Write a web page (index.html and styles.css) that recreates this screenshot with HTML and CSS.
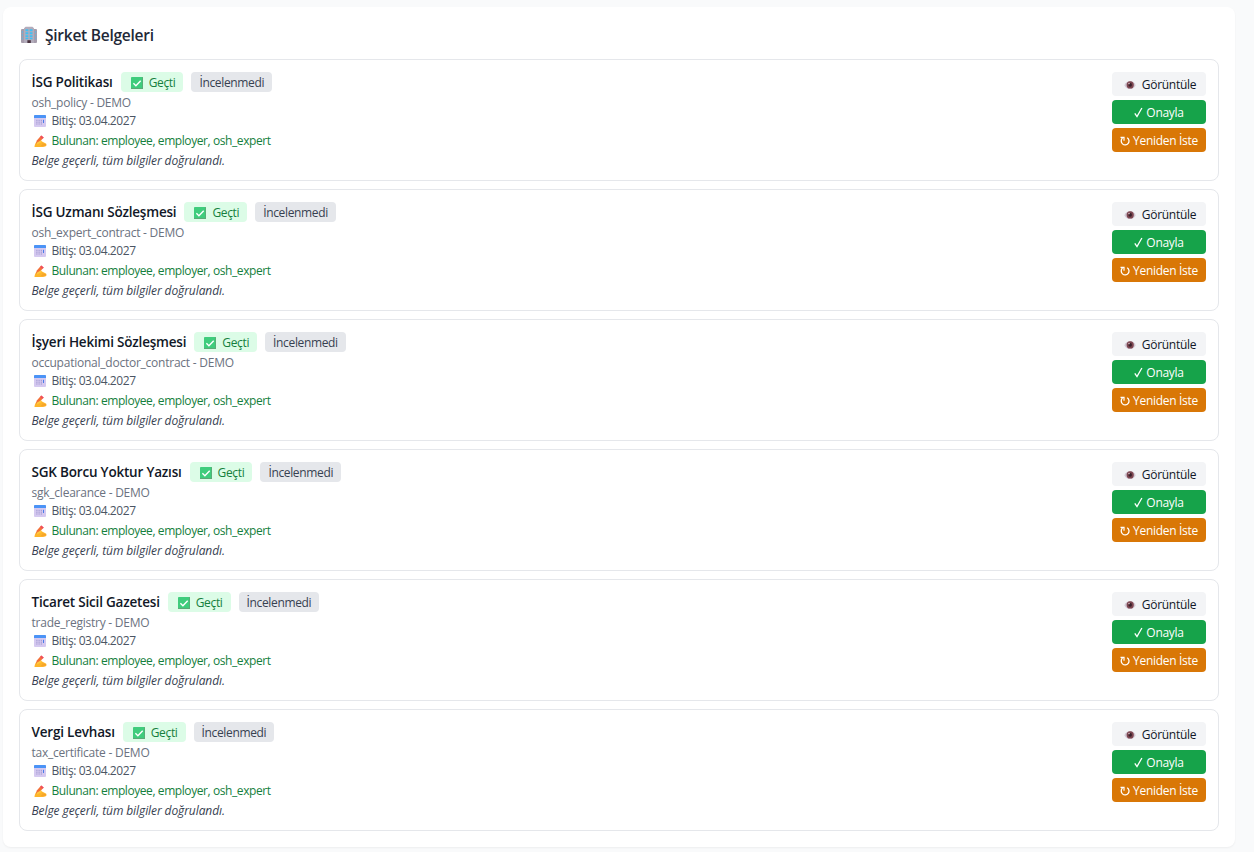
FILE: index.html
```html
<!DOCTYPE html>
<html lang="tr">
<head>
    <meta charset="UTF-8">
    <title>Şirket Belgeleri</title>
    <link rel="stylesheet" href="styles.css">
</head>
<body>
    <svg class="sprite" aria-hidden="true">
        <symbol id="i-building" viewBox="0 0 16 18">
            <rect x="0" y="3" width="16" height="14" rx="1" fill="#a69dac"/>
            <path d="M3 2.200L4.600.8h6.800L13 2.200V17H3z" fill="#b3acbb"/>
            <path d="M4.500 3.200h2.800v2H4.500zM8.700 3.200h2.800v2H8.700zM4.500 6.200h2.800v2H4.500zM8.700 6.200h2.800v2H8.700zM4.500 9.200h2.800v2H4.500zM8.700 9.200h2.800v2H8.700zM4.500 12h2.800v1.300H4.500zM8.700 12h2.800v1.300H8.700z" fill="#3fc0f5"/>
            <path d="M.8 5h1.200v2H.8zM.8 8.200h1.200v2H.8zM.8 11.400h1.200v2H.8zM14 5h1.200v2H14zM14 8.200h1.200v2H14zM14 11.400h1.200v2H14z" fill="#6fb0d3"/>
            <rect x="6.400" y="14.200" width="3.400" height="2.800" fill="#4a3440"/>
        </symbol>
        <symbol id="i-check" viewBox="0 0 12 12">
            <rect width="12" height="12" rx=".8" fill="#3fcc7c"/>
            <path d="M0 11h12v.4a.6.6 0 0 1-.6.6H.6a.6.6 0 0 1-.6-.6zM11.2 0h.8v12h-.8z" fill="#5da877"/>
            <path d="M2.4 6.3l2.5 2.4 4.8-5" fill="none" stroke="#fff" stroke-width="1.4"/>
        </symbol>
        <symbol id="i-calendar" viewBox="0 0 12 12">
            <rect width="12" height="12" rx="1" fill="#d5c9f0"/>
            <path d="M1 0h10a1 1 0 0 1 1 1v1.900H0V1a1 1 0 0 1 1-1z" fill="#4b93f6"/>
            <path d="M2.900 4.800v4.800M5.100 4.800v4.800M7.300 4.800v4.800" stroke="#9f97cf" stroke-width="1" stroke-dasharray="1.3 .5"/>
            <path d="M9.500 4.800v3.200" stroke="#4a7de8" stroke-width="1"/>
        </symbol>
        <symbol id="i-write" viewBox="0 0 13 13">
            <path d="M.5 11.300c.4-2.700 1.600-5 4-5.900 1.600-.6 2.600.3 3.500 1.200l3.900 1.800c.9.500.8 1.200.2 1.400.7.500.3 1.500-.6 1.500-1.100.1-1.900.8-3.600.8H1.500c-.7 0-1.100-.2-1-.8z" fill="#fdb52b"/>
            <path d="M8 9l4 .7M7.200 10.500l4.200.4" stroke="#ef8e24" stroke-width=".5"/>
            <path d="M1.900 8.700l.9-3.200L7.200.6l2.500 2-5 5.300z" fill="#f3703a"/>
            <path d="M7.200.6l2.500 2-1 1.100-2.400-2z" fill="#ef4862"/>
            <path d="M3.600 8.300l3.400-1.900" stroke="#ffc83d" stroke-width="1.800" stroke-linecap="round"/>
        </symbol>
        <symbol id="i-eye" viewBox="0 0 12 10">
            <path d="M.3 5.200C1.800 2.200 4 1 6.200 1s4.200 1.200 5.500 4.200C10.200 8 8.200 9.100 6 9.100S1.800 8 .3 5.200z" fill="#d3c9d5"/>
            <circle cx="6.200" cy="4.900" r="3.600" fill="#7d4650"/>
            <circle cx="6.200" cy="4.900" r="1.800" fill="#39202a"/>
            <circle cx="5" cy="3.600" r=".8" fill="#d8b9c1"/>
        </symbol>
        <symbol id="i-tick" viewBox="0 0 9 11">
            <path d="M.8 6.300L3 9.600 7.900 1" fill="none" stroke="#fff" stroke-width="1.300"/>
        </symbol>
        <symbol id="i-redo" viewBox="0 0 10 10">
            <path d="M7.200 1.700A3.900 3.900 0 1 1 2.500 2.100" fill="none" stroke="#fff" stroke-width="1.300"/>
            <path d="M.5 1.300h3.500v3.500" fill="none" stroke="#fff" stroke-width="1.200"/>
        </symbol>
    </svg>

    <div class="panel">
        <h2><svg class="icon-building"><use href="#i-building"/></svg>Şirket Belgeleri</h2>

        <div class="doc-list">
            <div class="doc">
                <div class="doc-info">
                    <div class="doc-head">
                        <span class="doc-title">İSG Politikası</span>
                        <span class="badge badge-pass"><svg><use href="#i-check"/></svg>Geçti</span>
                        <span class="badge badge-wait">İncelenmedi</span>
                    </div>
                    <div class="doc-type">osh_policy - DEMO</div>
                    <div class="doc-date"><svg><use href="#i-calendar"/></svg>Bitiş: 03.04.2027</div>
                    <div class="doc-found"><svg><use href="#i-write"/></svg>Bulunan: employee, employer, osh_expert</div>
                    <div class="doc-note">Belge geçerli, tüm bilgiler doğrulandı.</div>
                </div>
                <div class="doc-actions">
                    <button class="btn btn-view"><svg><use href="#i-eye"/></svg>Görüntüle</button>
                    <button class="btn btn-approve"><svg><use href="#i-tick"/></svg>Onayla</button>
                    <button class="btn btn-again"><svg><use href="#i-redo"/></svg>Yeniden İste</button>
                </div>
            </div>

            <div class="doc">
                <div class="doc-info">
                    <div class="doc-head">
                        <span class="doc-title">İSG Uzmanı Sözleşmesi</span>
                        <span class="badge badge-pass"><svg><use href="#i-check"/></svg>Geçti</span>
                        <span class="badge badge-wait">İncelenmedi</span>
                    </div>
                    <div class="doc-type">osh_expert_contract - DEMO</div>
                    <div class="doc-date"><svg><use href="#i-calendar"/></svg>Bitiş: 03.04.2027</div>
                    <div class="doc-found"><svg><use href="#i-write"/></svg>Bulunan: employee, employer, osh_expert</div>
                    <div class="doc-note">Belge geçerli, tüm bilgiler doğrulandı.</div>
                </div>
                <div class="doc-actions">
                    <button class="btn btn-view"><svg><use href="#i-eye"/></svg>Görüntüle</button>
                    <button class="btn btn-approve"><svg><use href="#i-tick"/></svg>Onayla</button>
                    <button class="btn btn-again"><svg><use href="#i-redo"/></svg>Yeniden İste</button>
                </div>
            </div>

            <div class="doc">
                <div class="doc-info">
                    <div class="doc-head">
                        <span class="doc-title">İşyeri Hekimi Sözleşmesi</span>
                        <span class="badge badge-pass"><svg><use href="#i-check"/></svg>Geçti</span>
                        <span class="badge badge-wait">İncelenmedi</span>
                    </div>
                    <div class="doc-type">occupational_doctor_contract - DEMO</div>
                    <div class="doc-date"><svg><use href="#i-calendar"/></svg>Bitiş: 03.04.2027</div>
                    <div class="doc-found"><svg><use href="#i-write"/></svg>Bulunan: employee, employer, osh_expert</div>
                    <div class="doc-note">Belge geçerli, tüm bilgiler doğrulandı.</div>
                </div>
                <div class="doc-actions">
                    <button class="btn btn-view"><svg><use href="#i-eye"/></svg>Görüntüle</button>
                    <button class="btn btn-approve"><svg><use href="#i-tick"/></svg>Onayla</button>
                    <button class="btn btn-again"><svg><use href="#i-redo"/></svg>Yeniden İste</button>
                </div>
            </div>

            <div class="doc">
                <div class="doc-info">
                    <div class="doc-head">
                        <span class="doc-title">SGK Borcu Yoktur Yazısı</span>
                        <span class="badge badge-pass"><svg><use href="#i-check"/></svg>Geçti</span>
                        <span class="badge badge-wait">İncelenmedi</span>
                    </div>
                    <div class="doc-type">sgk_clearance - DEMO</div>
                    <div class="doc-date"><svg><use href="#i-calendar"/></svg>Bitiş: 03.04.2027</div>
                    <div class="doc-found"><svg><use href="#i-write"/></svg>Bulunan: employee, employer, osh_expert</div>
                    <div class="doc-note">Belge geçerli, tüm bilgiler doğrulandı.</div>
                </div>
                <div class="doc-actions">
                    <button class="btn btn-view"><svg><use href="#i-eye"/></svg>Görüntüle</button>
                    <button class="btn btn-approve"><svg><use href="#i-tick"/></svg>Onayla</button>
                    <button class="btn btn-again"><svg><use href="#i-redo"/></svg>Yeniden İste</button>
                </div>
            </div>

            <div class="doc">
                <div class="doc-info">
                    <div class="doc-head">
                        <span class="doc-title">Ticaret Sicil Gazetesi</span>
                        <span class="badge badge-pass"><svg><use href="#i-check"/></svg>Geçti</span>
                        <span class="badge badge-wait">İncelenmedi</span>
                    </div>
                    <div class="doc-type">trade_registry - DEMO</div>
                    <div class="doc-date"><svg><use href="#i-calendar"/></svg>Bitiş: 03.04.2027</div>
                    <div class="doc-found"><svg><use href="#i-write"/></svg>Bulunan: employee, employer, osh_expert</div>
                    <div class="doc-note">Belge geçerli, tüm bilgiler doğrulandı.</div>
                </div>
                <div class="doc-actions">
                    <button class="btn btn-view"><svg><use href="#i-eye"/></svg>Görüntüle</button>
                    <button class="btn btn-approve"><svg><use href="#i-tick"/></svg>Onayla</button>
                    <button class="btn btn-again"><svg><use href="#i-redo"/></svg>Yeniden İste</button>
                </div>
            </div>

            <div class="doc">
                <div class="doc-info">
                    <div class="doc-head">
                        <span class="doc-title">Vergi Levhası</span>
                        <span class="badge badge-pass"><svg><use href="#i-check"/></svg>Geçti</span>
                        <span class="badge badge-wait">İncelenmedi</span>
                    </div>
                    <div class="doc-type">tax_certificate - DEMO</div>
                    <div class="doc-date"><svg><use href="#i-calendar"/></svg>Bitiş: 03.04.2027</div>
                    <div class="doc-found"><svg><use href="#i-write"/></svg>Bulunan: employee, employer, osh_expert</div>
                    <div class="doc-note">Belge geçerli, tüm bilgiler doğrulandı.</div>
                </div>
                <div class="doc-actions">
                    <button class="btn btn-view"><svg><use href="#i-eye"/></svg>Görüntüle</button>
                    <button class="btn btn-approve"><svg><use href="#i-tick"/></svg>Onayla</button>
                    <button class="btn btn-again"><svg><use href="#i-redo"/></svg>Yeniden İste</button>
                </div>
            </div>
        </div>
    </div>
</body>
</html>
```
FILE: styles.css
```css
* {
    box-sizing: border-box;
}

body {
    margin: 0;
    padding: 7px 19px 5px 3px;
    background-color: #f9fafb;
    font-family: "Segoe UI", "Open Sans", "Noto Sans", sans-serif;
    font-size: 12px;
    line-height: 16px;
    color: #111827;
}

.sprite {
    display: none;
}

.panel {
    height: 840px;
    padding: 16px;
    background-color: #fff;
    border-radius: 8px;
    box-shadow: 0 1px 2px rgba(0, 0, 0, 0.05);
}

h2 {
    display: flex;
    align-items: center;
    margin: 0 0 12px;
    height: 24px;
    font-size: 15.5px;
    font-weight: 600;
    letter-spacing: -0.25px;
    color: #1f2937;
}

.icon-building {
    width: 16px;
    height: 18px;
    margin: 0 8px 0 2px;
}

.doc-list {
    display: flex;
    flex-direction: column;
    gap: 8px;
}

.doc {
    display: flex;
    justify-content: space-between;
    height: 122px;
    padding: 12px 12px 12px 11.5px;
    border: 1px solid #e5e7eb;
    border-radius: 8px;
}

.doc-head {
    display: flex;
    align-items: center;
    gap: 8px;
    height: 20px;
}

.doc-title {
    font-size: 13.5px;
    font-weight: 600;
    letter-spacing: -0.2px;
}

.badge {
    display: flex;
    align-items: center;
    height: 20px;
    padding: 2px 8px 0;
    border-radius: 4px;
    letter-spacing: -0.35px;
}

.badge svg {
    width: 12px;
    height: 12px;
    margin: 0 6px 0 2px;
}

.badge-pass {
    background-color: #dcfce7;
    color: #15803d;
}

.badge-wait {
    background-color: #e5e7eb;
    color: #374151;
}

.doc-type {
    margin-top: 3px;
    letter-spacing: -0.24px;
    color: #6b7280;
}

.doc-date,
.doc-found {
    display: flex;
    align-items: center;
    letter-spacing: -0.42px;
}

.doc-date {
    margin-top: 2px;
    color: #4b5563;
}

.doc-date svg {
    width: 12px;
    height: 12px;
    margin: 0 6px 0 2px;
}

.doc-found {
    margin-top: 4px;
    color: #15803d;
}

.doc-found svg {
    width: 13px;
    height: 13px;
    margin: 0 5px 0 2px;
}

.doc-note {
    margin-top: 4px;
    font-style: italic;
    letter-spacing: -0.09px;
    color: #374151;
}

.doc-actions {
    display: flex;
    flex-direction: column;
    gap: 4px;
    width: 94px;
}

.btn {
    display: flex;
    align-items: center;
    justify-content: center;
    height: 24px;
    padding: 2px 0 0;
    border: none;
    border-radius: 4px;
    font: inherit;
    letter-spacing: -0.3px;
    color: #fff;
    cursor: pointer;
}

.btn-view {
    background-color: #f3f4f6;
    color: #111827;
}

.btn-view svg {
    width: 12px;
    height: 10px;
    margin: 0 6px 0 2px;
}

.btn-approve {
    background-color: #16a34a;
}

.btn-approve svg {
    width: 9px;
    height: 11px;
    margin: 0 3px 2px 0;
}

.btn-again {
    background-color: #d97706;
}

.btn-again svg {
    width: 10px;
    height: 10px;
    margin: 0 3px 0 0;
}
```
